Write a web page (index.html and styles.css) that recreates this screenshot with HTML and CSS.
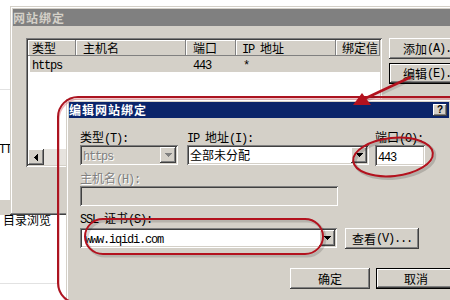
FILE: index.html
```html
<!DOCTYPE html>
<html>
<head>
<meta charset="utf-8">
<link rel="stylesheet" href="styles.css">
</head>
<body>
<div class="desk">
  <div class="dline dline1"></div>
  <div class="dtext tt"><span class="l">TT</span></div>
  <div class="strip"></div>
  <div class="dtext dir">目录浏览</div>
  <div class="dline dline2"></div>

  <div class="win back">
    <div class="title">网站绑定</div>
    <div class="back-body">
      <div class="listview">
        <div class="lv-head">
          <div class="hc c1">类型</div>
          <div class="hc c2">主机名</div>
          <div class="hc c3">端口</div>
          <div class="hc c4"><span class="l">IP </span>地址</div>
          <div class="hc c5">绑定信</div>
        </div>
        <div class="lv-row">
          <div class="rc r1"><span class="l">https</span></div>
          <div class="rc r2"></div>
          <div class="rc r3"><span class="l">443</span></div>
          <div class="rc r4"><span class="l">*</span></div>
        </div>
        <div class="lv-space"></div>
        <div class="hscroll">
          <div class="sbtn"><svg width="4" height="7" viewBox="0 0 4 7" shape-rendering="crispEdges"><path d="M3 0h1v7h-1v-1h-1v-1h-1v-1h-1v-1h1v-1h1v-1h1z" fill="#000"/></svg></div>
          <div class="track"></div>
        </div>
      </div>
      <div class="side">
        <div class="btn">添加<span class="l">(A)...</span></div>
        <div class="btn def">编辑<span class="l">(E)...</span></div>
      </div>
    </div>
  </div>

  <div class="win front">
    <div class="title"><span>编辑网站绑定</span><div class="cap-btn">?</div></div>
    <div class="f-body">
      <div class="f-row1">
        <div class="field fw-type">
          <div class="lbl">类型<span class="l">(T):</span></div>
          <div class="combo disabled">
            <div class="ctext"><span class="l">https</span></div>
            <div class="dd"><svg width="7" height="4" viewBox="0 0 7 4" shape-rendering="crispEdges"><path d="M0 0h7v1h-1v1h-1v1h-1v1h-1v-1h-1v-1h-1v-1h-1z"/></svg></div>
          </div>
        </div>
        <div class="field fw-ip">
          <div class="lbl"><span class="l">IP </span>地址<span class="l">(I):</span></div>
          <div class="combo">
            <div class="ctext">全部未分配</div>
            <div class="dd"><svg width="7" height="4" viewBox="0 0 7 4" shape-rendering="crispEdges"><path d="M0 0h7v1h-1v1h-1v1h-1v1h-1v-1h-1v-1h-1v-1h-1z"/></svg></div>
          </div>
        </div>
        <div class="field fw-port">
          <div class="lbl">端口<span class="l">(O):</span></div>
          <div class="textbox port"><span class="l">443</span></div>
        </div>
      </div>
      <div class="lbl dis mt5">主机名<span class="l">(H):</span></div>
      <div class="textbox host"></div>
      <div class="lbl mt5"><span class="l">SSL </span>证书<span class="l">(S):</span></div>
      <div class="f-ssl">
        <div class="combo ssl">
          <div class="ctext"><span class="l">www.iqidi.com</span></div>
          <div class="dd"><svg width="7" height="4" viewBox="0 0 7 4" shape-rendering="crispEdges"><path d="M0 0h7v1h-1v1h-1v1h-1v1h-1v-1h-1v-1h-1v-1h-1z"/></svg></div>
        </div>
        <div class="btn view">查看<span class="l">(V)...</span></div>
      </div>
      <div class="f-btns">
        <div class="btn ok">确定</div>
        <div class="btn def cancel">取消</div>
      </div>
    </div>
  </div>

  <svg class="marks" width="450" height="300" viewBox="0 0 450 300">
    <g fill="none">
      <rect x="59" y="99" width="420" height="206" rx="20" stroke="rgba(220,120,130,0.55)" stroke-width="1.5"/>
      <rect x="58" y="97" width="420" height="206" rx="20" stroke="#ac1420" stroke-width="2"/>
      <ellipse cx="395" cy="159" rx="40" ry="19" transform="rotate(-6 395 159)" stroke="rgba(0,0,0,0.16)" stroke-width="3"/>
      <ellipse cx="393" cy="157" rx="40" ry="19" transform="rotate(-6 393 157)" stroke="#b3121e" stroke-width="2"/>
      <rect x="87" y="221" width="238" height="35" rx="18" stroke="rgba(0,0,0,0.14)" stroke-width="3"/>
      <rect x="85" y="219" width="238" height="35" rx="18" stroke="#b3121e" stroke-width="2"/>
      <line x1="413" y1="79" x2="366" y2="101" stroke="rgba(0,0,0,0.12)" stroke-width="3"/>
      <line x1="411" y1="77" x2="364" y2="99" stroke="#b3121e" stroke-width="2.5"/>
    </g>
    <polygon points="353,105 362,93 371,105" fill="#b3121e"/>
  </svg>
</div>
</body>
</html>
```

FILE: styles.css
```css
* { box-sizing: border-box; margin: 0; padding: 0; }
html, body { width: 450px; height: 300px; overflow: hidden; background: #fff; }
body {
  font-family: "Noto Sans CJK SC", "Liberation Sans", sans-serif;
  font-size: 12px;
  color: #000;
}
.l { font-family: "Liberation Mono", monospace; letter-spacing: -1.2px; }

.desk { position: relative; width: 450px; height: 300px; overflow: hidden; }
.dline { position: absolute; height: 1px; background: #e2e2e2; }
.dline1 { left: 0; top: 89px; width: 10px; }
.dline2 { left: 0; top: 283px; width: 57px; }
.dtext { position: absolute; line-height: 14px; white-space: nowrap; }
.tt { left: -1px; top: 141px; }
.dir { left: 3px; top: 213px; }
.strip { position: absolute; left: 0; top: 200px; width: 12px; height: 15px; background: #d4d0c8; }

.win {
  position: absolute;
  background: #d4d0c8;
  padding: 3px;
  box-shadow: inset -1px -1px #404040, inset 1px 1px #d4d0c8, inset -2px -2px #808080, inset 2px 2px #fff;
}
.back { left: 10px; top: 6px; width: 470px; height: 209px; }
.front { left: 66px; top: 99px; width: 386px; height: 215px; }

.title {
  display: flex;
  align-items: center;
  font-weight: bold;
  letter-spacing: 1px;
  line-height: 16px;
  white-space: nowrap;
}
.back .title { height: 17px; background: #808080; color: #d4d0c8; }
.front .title { height: 16px; background: #0a246a; color: #fff; }
.cap-btn {
  margin-left: auto;
  margin-right: 2px;
  width: 14px;
  height: 12px;
  background: #d4d0c8;
  color: #000;
  font-family: "Liberation Sans", sans-serif;
  font-size: 10px;
  font-weight: bold;
  letter-spacing: 0;
  line-height: 12px;
  text-align: center;
  box-shadow: inset -1px -1px #404040, inset 1px 1px #fff, inset -2px -2px #808080;
}

.raised, .btn, .dd, .sbtn {
  box-shadow: inset -1px -1px #404040, inset 1px 1px #fff, inset -2px -2px #808080, inset 2px 2px #d4d0c8;
  background: #d4d0c8;
}

/* back window */
.back-body { display: flex; gap: 7px; padding: 12px 0 0 13px; }
.listview {
  width: 358px;
  height: 129px;
  background: #fff;
  padding: 2px;
  display: flex;
  flex-direction: column;
  box-shadow: inset 1px 1px #808080, inset -1px -1px #fff, inset 2px 2px #404040, inset -2px -2px #d4d0c8;
}
.lv-head { display: flex; height: 16px; flex: none; }
.hc {
  flex: none;
  height: 16px;
  line-height: 16px;
  padding-left: 6px;
  background: #d4d0c8;
  white-space: nowrap;
  overflow: hidden;
  box-shadow: inset -1px -1px #808080, inset 1px 1px #fff;
}
.c1 { width: 48px; padding-left: 4px; }
.c2 { width: 110px; padding-left: 7px; }
.c3 { width: 50px; padding-left: 7px; }
.c4 { width: 100px; }
.c5 { flex: 1; }
.lv-row { display: flex; height: 16px; line-height: 16px; margin: 0 0 0 2px; background: #d4d0c8; }
.rc { flex: none; white-space: nowrap; }
.r1 { width: 46px; padding-left: 2px; }
.r2 { width: 110px; }
.r3 { width: 50px; padding-left: 7px; }
.r4 { width: 100px; padding-left: 7px; }
.lv-space { flex: 1; }
.hscroll { display: flex; height: 16px; background: #e6e3de; flex: none; }
.sbtn { width: 16px; height: 16px; display: flex; align-items: center; justify-content: center; }
.track { flex: 1; }

.side { display: flex; flex-direction: column; gap: 4px; }
.btn {
  height: 21px;
  display: flex;
  align-items: center;
  justify-content: center;
  line-height: 14px;
  white-space: nowrap;
}
.side .btn { width: 88px; }
.btn.def { border: 1px solid #000; }

/* front window */
.f-body { display: flex; flex-direction: column; align-items: flex-start; padding: 12px 0 0 11px; }
.lbl { height: 14px; line-height: 14px; white-space: nowrap; }
.lbl.dis, .combo.disabled { color: #808080; text-shadow: 1px 1px #fff; }
.mt5 { margin-top: 5px; }
.f-row1 { display: flex; align-items: flex-start; }
.field { display: flex; flex-direction: column; gap: 1px; }
.fw-type { width: 98px; margin-right: 9px; }
.fw-ip { width: 182px; margin-right: 6px; }
.fw-port { width: 50px; }

.combo, .textbox {
  box-shadow: inset 1px 1px #808080, inset -1px -1px #fff, inset 2px 2px #404040, inset -2px -2px #d4d0c8;
  background: #fff;
}
.combo { display: flex; height: 20px; padding: 2px; }
.combo.disabled { background: #d4d0c8; }
.ctext { flex: 1; line-height: 16px; padding-left: 1px; white-space: nowrap; overflow: hidden; }
.dd { width: 16px; height: 16px; display: flex; align-items: center; justify-content: center; }
.dd svg { fill: #000; }
.combo.disabled .dd svg { fill: #808080; }
.textbox { height: 21px; line-height: 17px; padding: 2px 0 0 3px; }
.host { width: 258px; height: 20px; margin-top: 1px; background: #d4d0c8; }

.f-ssl { display: flex; align-items: flex-start; gap: 8px; margin-top: 3px; }
.ssl { width: 257px; }
.ssl .ctext { padding-left: 3px; }
.view { width: 74px; }
.f-btns { display: flex; gap: 6px; margin: 19px 0 0 210px; }
.ok, .cancel { width: 80px; }

.marks { position: absolute; left: 0; top: 0; pointer-events: none; }
```
